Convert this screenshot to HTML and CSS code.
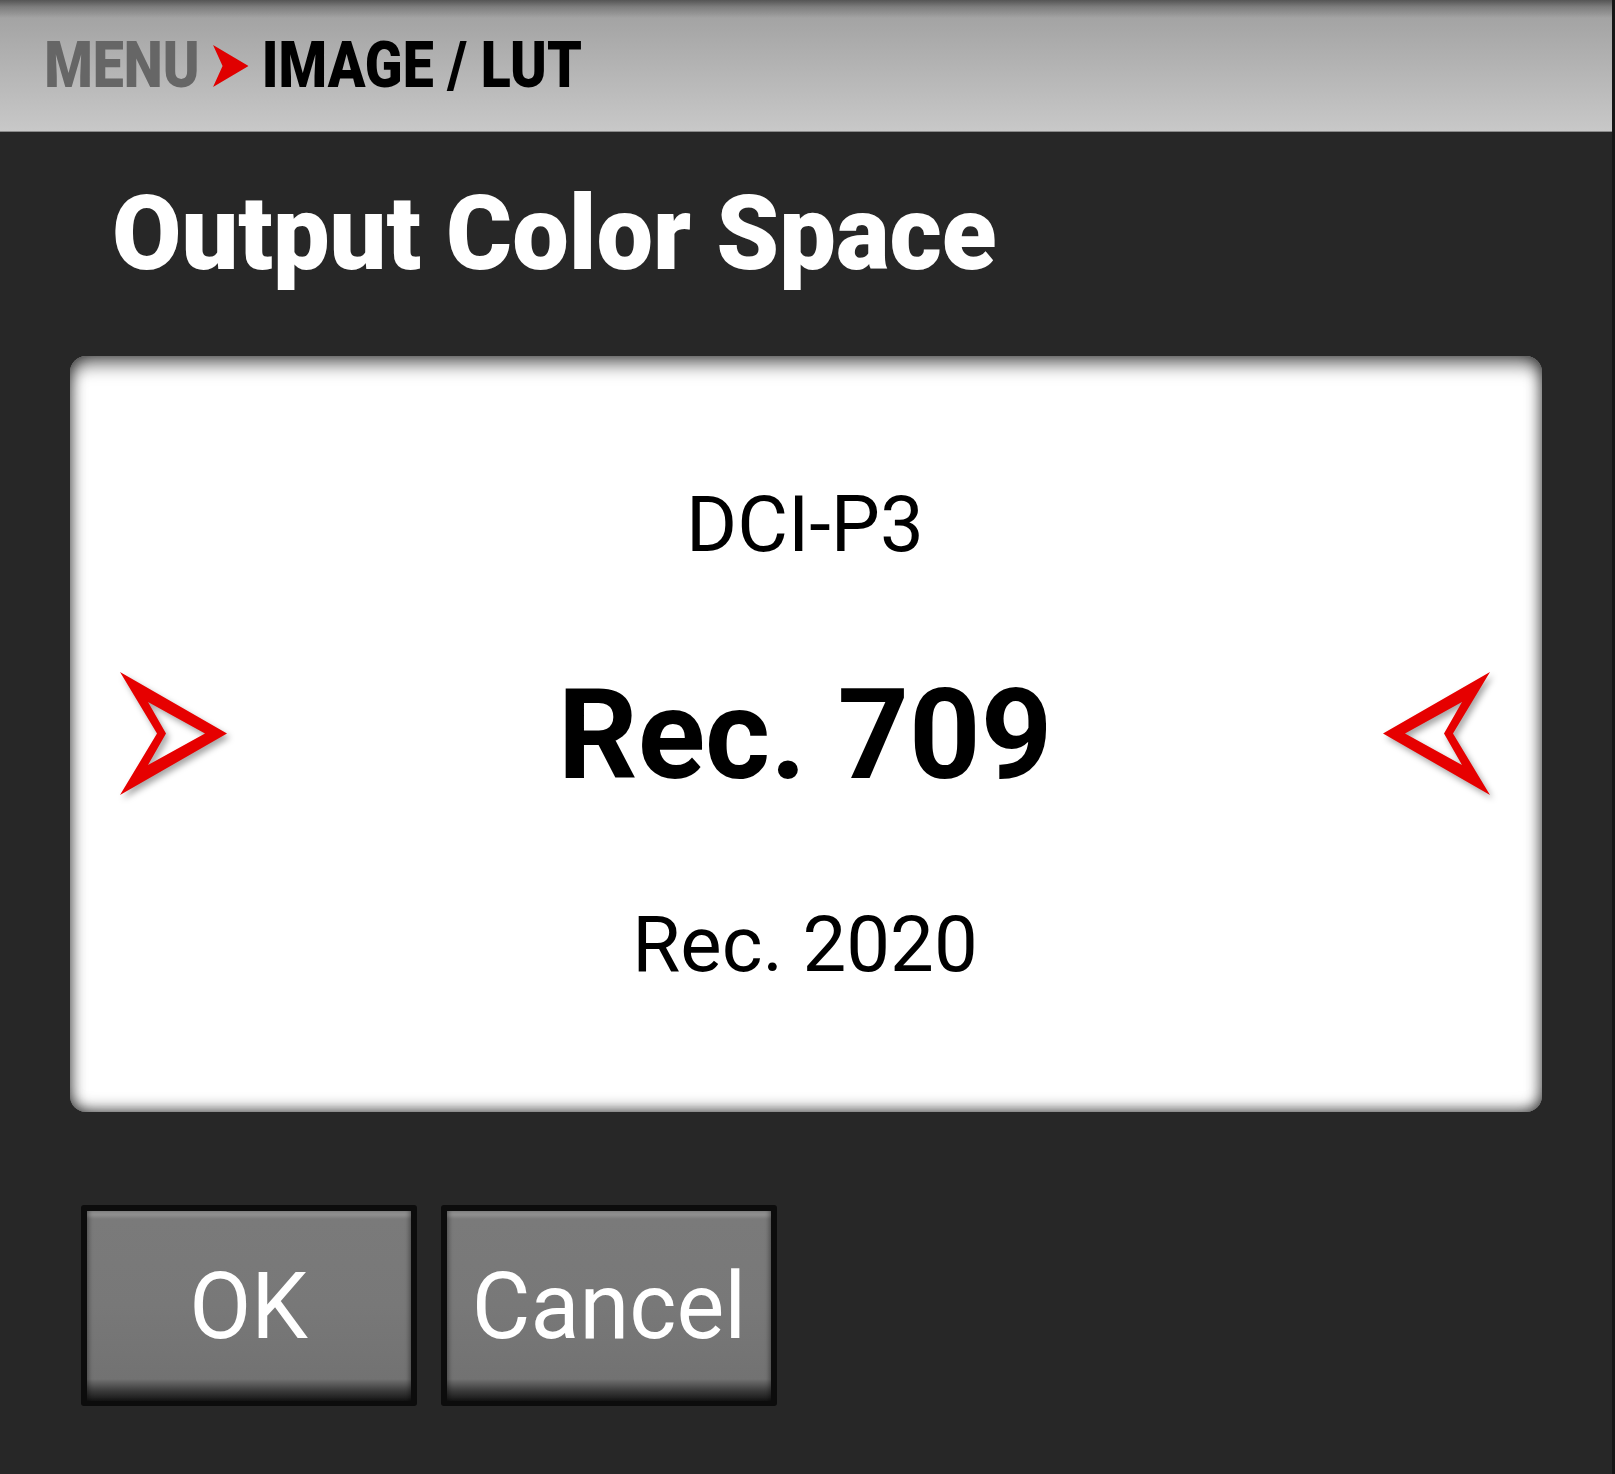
FILE: index.html
```html
<!DOCTYPE html>
<html lang="en">
<head>
<meta charset="utf-8">
<title>Output Color Space</title>
<link rel="stylesheet" href="styles.css">
</head>
<body>
<div class="screen">
  <header class="topbar">
    <div class="crumbs">
      <span class="crumb-menu">MENU</span>
      <svg class="crumb-arrow" viewBox="0 0 41 42" width="41" height="42"><path d="M0 0 L41 21 L0 42 L11 21 Z" fill="#e00000"/></svg>
      <span class="crumb-current">IMAGE / LUT</span>
    </div>
  </header>

  <h1 class="title"><span class="sq-left">Output Color Space</span></h1>

  <section class="picker">
    <svg class="nav" viewBox="0 0 108 124" width="108" height="124"><path fill-rule="evenodd" d="M0 0 L107 61.5 L0 123 L37 61.5 Z M28 30 L85 61.5 L28 93 L46 61.5 Z" fill="#e60000"/></svg>
    <ul class="options">
      <li class="option">DCI-P3</li>
      <li class="option selected">Rec. 709</li>
      <li class="option">Rec. 2020</li>
    </ul>
    <svg class="nav nav-right" viewBox="0 0 108 124" width="108" height="124"><path fill-rule="evenodd" d="M0 0 L107 61.5 L0 123 L37 61.5 Z M28 30 L85 61.5 L28 93 L46 61.5 Z" fill="#e60000"/></svg>
  </section>

  <div class="actions">
    <button class="btn"><span class="face"><span class="label">OK</span></span></button>
    <button class="btn"><span class="face"><span class="label">Cancel</span></span></button>
  </div>
</div>
</body>
</html>
```

FILE: styles.css
```css
html, body {
  margin: 0;
  padding: 0;
}

body {
  background: #272727;
  width: 1615px;
  height: 1474px;
  overflow: hidden;
  font-family: Roboto, "Liberation Sans", sans-serif;
}

.screen {
  width: 1612px;
  height: 1474px;
  border-right: 3px solid #161616;
  background: #272727;
  display: flex;
  flex-direction: column;
}

/* ---------- top bar ---------- */
.topbar {
  height: 131px;
  flex: none;
  border-bottom: 1px solid #8a8a8a;
  background:
    linear-gradient(to bottom, rgba(60,60,60,0.75) 0, rgba(60,60,60,0.35) 7px, rgba(60,60,60,0) 18px),
    linear-gradient(to bottom, #9e9e9e 0%, #c8c8c8 100%);
  display: flex;
  align-items: center;
}

.crumbs {
  display: flex;
  align-items: center;
  padding-left: 51px;
  transform: scaleX(0.866);
  transform-origin: 0 50%;
  font-weight: 900;
  font-size: 64px;
  line-height: 1;
  white-space: nowrap;
}

.crumb-menu {
  color: #666666;
}

.crumb-arrow {
  margin: 0 15px 0 16px;
  display: block;
}

.crumb-current {
  color: #000;
}

/* ---------- title ---------- */
.title {
  margin: 0;
  height: 224px;
  flex: none;
  box-sizing: border-box;
  padding: 50px 0 0 112px;
  font-size: 104px;
  line-height: 104px;
  font-weight: 900;
  color: #ffffff;
  white-space: nowrap;
}

.sq-left {
  display: inline-block;
  transform: scaleX(0.968);
  transform-origin: 0 50%;
}

/* ---------- picker panel ---------- */
.picker {
  flex: none;
  margin-left: 70px;
  width: 1472px;
  height: 756px;
  box-sizing: border-box;
  border-radius: 16px;
  background: #ffffff;
  box-shadow:
    inset 0 14px 18px -6px rgba(0,0,0,0.6),
    inset 10px 0 14px -6px rgba(0,0,0,0.40),
    inset -10px 0 14px -6px rgba(0,0,0,0.40),
    inset 0 -10px 14px -6px rgba(0,0,0,0.50);
  display: flex;
  align-items: center;
  padding: 0 52px 0 50px;
}

.nav {
  display: block;
  flex: none;
  filter: drop-shadow(3px 4px 3px rgba(0,0,0,0.35));
}

.nav-right {
  transform: scaleX(-1);
  filter: drop-shadow(-3px 4px 3px rgba(0,0,0,0.35));
}

.options {
  flex: 1;
  list-style: none;
  margin: 0;
  padding: 0;
  display: flex;
  flex-direction: column;
}

.option {
  height: 210px;
  display: flex;
  align-items: center;
  justify-content: center;
  font-size: 78px;
  font-weight: 400;
  color: #000;
  white-space: nowrap;
}

.option.selected {
  font-size: 127px;
  font-weight: 700;
  transform: scaleX(0.983);
}

/* ---------- buttons ---------- */
.actions {
  flex: none;
  margin-top: 93px;
  padding-left: 81px;
  display: flex;
  gap: 24px;
}

.btn {
  width: 336px;
  height: 201px;
  box-sizing: border-box;
  padding: 6px 6px 5px 6px;
  border: none;
  border-radius: 3px;
  background: #0c0c0c;
  cursor: pointer;
  display: block;
}

.face {
  display: flex;
  width: 100%;
  height: 100%;
  align-items: center;
  justify-content: center;
  background: linear-gradient(to bottom,
    #8e8e8e 0, #8e8e8e 4px, #7a7a7a 8px, #787878 50%, #727272 calc(100% - 22px), #3a3a3a calc(100% - 10px), #151515 100%);
  box-shadow:
    inset 4px 0 4px -2px rgba(0,0,0,0.35),
    inset -4px 0 4px -2px rgba(0,0,0,0.35);
}

.label {
  display: inline-block;
  font-family: Roboto, "Liberation Sans", sans-serif;
  font-size: 92px;
  font-weight: 400;
  line-height: 1;
  color: #ffffff;
  transform: scaleX(0.98);
  margin-top: 2px;
}
```
